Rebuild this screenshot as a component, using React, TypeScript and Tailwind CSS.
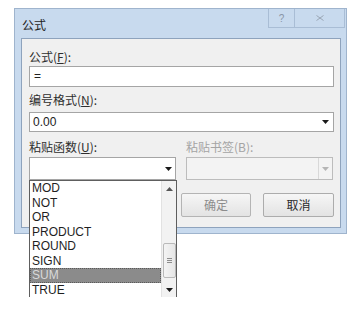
const items = ['MOD', 'NOT', 'OR', 'PRODUCT', 'ROUND', 'SIGN', 'SUM', 'TRUE'];

const cjk = "font-['Noto_Sans_CJK_SC','Noto_Sans',sans-serif]";

function Arrow({ muted }: { muted?: boolean }) {
    return (
        <svg width="7" height="4" viewBox="0 0 7 4">
            <path d="M0 0h7L3.5 4z" fill={muted ? '#b5b5b5' : '#1a1a1a'} />
        </svg>
    );
}

function Label({ text, k, disabled }: { text: string; k?: string; disabled?: boolean }) {
    return (
        <div className={`h-[16px] text-[12px] leading-[16px] ${cjk} ${disabled ? 'text-[#a4a4a4]' : 'text-[#2e2e2e]'}`}>
            {text}
            {k ? (
                <>
                    (<span className="underline">{k}</span>):
                </>
            ) : null}
        </div>
    );
}

export default function App() {
    return (
        <div className="relative w-[355px] h-[309px] bg-white pt-[8px] pl-[14px] overflow-hidden">
            {/* dialog frame */}
            <div className="w-[333px] h-[226px] border border-[#9fb4cd] bg-[#c8daee] pl-[6px] pr-[5px] flex flex-col">
                <div className="h-[29px] flex items-start justify-between">
                    <span className={`mt-[8px] ml-[1px] text-[12px] leading-[16px] text-[#1e1e1e] ${cjk}`}>公式</span>
                    <div className="flex mr-[-4px]">
                        <div className="w-[27px] h-[19px] border border-[#a9bdd5] border-t-0 flex items-center justify-center text-[10px] text-[#8895a6] font-['Liberation_Sans',sans-serif]">
                            ?
                        </div>
                        <div className="w-[50px] h-[19px] border border-[#a9bdd5] border-t-0 border-l-0 flex items-center justify-center">
                            <svg width="8" height="6" viewBox="0 0 8 6">
                                <path d="M0.5 0.5l7 5M7.5 0.5l-7 5" stroke="#9aa6b5" strokeWidth="1" fill="none" />
                            </svg>
                        </div>
                    </div>
                </div>

                {/* client area */}
                <div className="h-[190px] border border-[#8ea3bd] bg-[#f0f0f0] pt-[10px] pl-[7px] pr-[6px] flex flex-col">
                    <Label text="公式" k="F" />
                    <div className="mt-[1px] h-[21px] border border-[#a5a5a5] bg-white px-[4px] text-[12px] leading-[19px] text-[#222] font-['Liberation_Sans',sans-serif]">
                        =
                    </div>

                    <div className="mt-[5px]">
                        <Label text="编号格式" k="N" />
                    </div>
                    <div className="mt-[4px] h-[20px] border border-[#a5a5a5] bg-white flex items-center justify-between pl-[3px] pr-[4px]">
                        <span className="text-[12px] text-[#222] font-['Liberation_Sans',sans-serif]">0.00</span>
                        <Arrow />
                    </div>

                    <div className="mt-[7px] flex gap-[8px]">
                        <div className="w-[149px]">
                            <Label text="粘贴函数" k="U" />
                        </div>
                        <Label text="粘贴书签(B):" disabled />
                    </div>
                    <div className="mt-[2px] flex gap-[10px]">
                        <div className="w-[147px] h-[23px] border border-[#a5a5a5] bg-white flex justify-end">
                            <div className="w-[14px] flex items-center justify-center">
                                <Arrow />
                            </div>
                        </div>
                        <div className="w-[147px] h-[23px] border border-[#bcbcbc] bg-[#f3f3f3] flex justify-end">
                            <div className="w-[14px] border-l border-[#d8d8d8] flex items-center justify-center">
                                <Arrow muted />
                            </div>
                        </div>
                    </div>

                    <div className="mt-[13px] flex justify-end gap-[12px]">
                        <button className={`w-[70px] h-[24px] border border-[#b4b4b4] rounded-[2px] bg-gradient-to-b from-[#f6f6f6] to-[#e3e3e3] text-[12px] text-[#8c8c8c] ${cjk}`}>
                            确定
                        </button>
                        <button className={`w-[71px] h-[24px] border border-[#acacac] rounded-[2px] bg-gradient-to-b from-[#f6f6f6] to-[#e3e3e3] text-[12px] text-[#2a2a2a] ${cjk}`}>
                            取消
                        </button>
                    </div>
                </div>
            </div>

            {/* open function list */}
            <div className="absolute left-[29px] top-[180px] w-[148px] h-[117px] border-x border-t border-[#5e5e5e] bg-white flex">
                <div className="flex-1 pt-[0px]">
                    {items.map((it) => (
                        <div
                            key={it}
                            className={`h-[14.5px] leading-[14.5px] pl-[2px] text-[12px] font-['Liberation_Sans',sans-serif] ${
                                it === 'SUM'
                                    ? 'bg-[#8b8b8b] text-[#d9d9d9] outline-1 outline-dotted outline-offset-[-1px] outline-[#5a5a5a]'
                                    : 'text-[#1f1f1f]'
                            }`}
                        >
                            {it}
                        </div>
                    ))}
                </div>
                <div className="w-[15px] bg-[#f2f2f2] border-l border-[#e2e2e2] flex flex-col items-center">
                    <div className="h-[15px] flex items-center justify-center">
                        <svg width="7" height="4" viewBox="0 0 7 4">
                            <path d="M0 4h7L3.5 0z" fill="#555" />
                        </svg>
                    </div>
                    <div className="mt-[47px] w-[13px] h-[35px] border border-[#b9b9b9] rounded-[2px] bg-gradient-to-r from-[#f4f4f4] to-[#e6e6e6] flex flex-col items-center justify-center gap-[1px]">
                        <div className="w-[5px] h-px bg-[#8d8d8d]" />
                        <div className="w-[5px] h-px bg-[#8d8d8d]" />
                        <div className="w-[5px] h-px bg-[#8d8d8d]" />
                    </div>
                    <div className="mt-auto h-[15px] flex items-center justify-center">
                        <Arrow />
                    </div>
                </div>
            </div>
        </div>
    );
}
